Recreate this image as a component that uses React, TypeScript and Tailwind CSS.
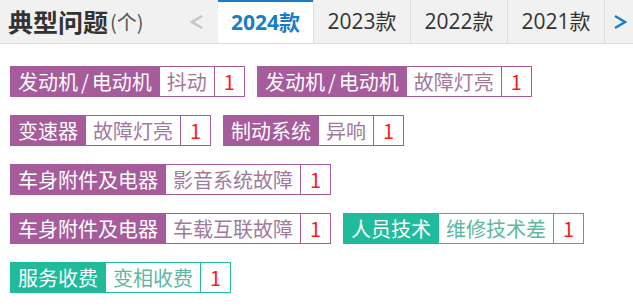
import React from "react";

type Tag = { cat: string; item: string; n: number; color: "purple" | "green" };

const tags: Tag[] = [
  { cat: "发动机/电动机", item: "抖动", n: 1, color: "purple" },
  { cat: "发动机/电动机", item: "故障灯亮", n: 1, color: "purple" },
  { cat: "变速器", item: "故障灯亮", n: 1, color: "purple" },
  { cat: "制动系统", item: "异响", n: 1, color: "purple" },
  { cat: "车身附件及电器", item: "影音系统故障", n: 1, color: "purple" },
  { cat: "车身附件及电器", item: "车载互联故障", n: 1, color: "purple" },
  { cat: "人员技术", item: "维修技术差", n: 1, color: "green" },
  { cat: "服务收费", item: "变相收费", n: 1, color: "green" },
];

const breakAfter = new Set([1, 3, 4, 6]);

function Cat({ text }: { text: string }) {
  const parts = text.split("/");
  if (parts.length === 1) return <>{text}</>;
  return (
    <>
      {parts[0]}
      <span className="mx-[3px]">/</span>
      {parts[1]}
    </>
  );
}

function TagView({ t }: { t: Tag }) {
  const purple = t.color === "purple";
  return (
    <div className="flex h-[31px] items-stretch text-[20px] leading-[29px]">
      <span
        className={
          purple
            ? "bg-[#a65b9b] text-white px-[7px] border border-[#a65b9b]"
            : "bg-[#1fbb9b] text-white px-[7px] border border-[#1fbb9b]"
        }
      >
        <Cat text={t.cat} />
      </span>
      <span
        className={
          purple
            ? "bg-white text-[#a07a9c] px-[7px] border-y border-r border-[#a65b9b]"
            : "bg-white text-[#5cb8a3] px-[7px] border-y border-r border-[#1fbb9b]"
        }
      >
        {t.item}
      </span>
      <span
        className={
          purple
            ? "bg-white text-[#ff1a1a] px-[9px] border-y border-r border-[#a65b9b]"
            : "bg-white text-[#ff1a1a] px-[9px] border-y border-r border-[#1fbb9b]"
        }
      >
        {t.n}
      </span>
    </div>
  );
}

export default function App() {
  const rows: Tag[][] = [];
  let cur: Tag[] = [];
  tags.forEach((t, i) => {
    cur.push(t);
    if (breakAfter.has(i) || i === tags.length - 1) {
      rows.push(cur);
      cur = [];
    }
  });
  return (
    <div
      className="w-[633px] h-[308px] bg-white overflow-hidden"
      style={{ fontFamily: '"Noto Sans CJK SC", "Noto Sans", sans-serif' }}
    >
      <div className="flex h-[44px] items-stretch bg-[#f1f1f1] border-b border-[#dcdcdc]">
        <div className="flex items-center pl-[8px] w-[180px]">
          <span className="text-[25px] font-bold text-[#333]">典型问题</span>
          <span className="text-[20px] text-[#555] ml-[2px]">(个)</span>
        </div>
        <div className="flex items-center w-[38px] pl-[10px]">
          <svg width="14" height="16" viewBox="0 0 14 16">
            <polyline points="12,2 2,8 12,14" fill="none" stroke="#c4c4c4" strokeWidth="2.4" />
          </svg>
        </div>
        <div
          className="flex items-center justify-center w-[95px] bg-white border-t-[2px] border-[#1a7cc4] text-[21px] font-bold text-[#1a7cc4]"
          style={{ fontFamily: '"Open Sans", "Noto Sans CJK SC", sans-serif' }}
        >
          2024款
        </div>
        {["2023款", "2022款", "2021款"].map((y) => (
          <div
            key={y}
            className="flex items-center justify-center w-[97px] border-l border-[#dcdcdc] text-[21px] text-[#333]"
            style={{ fontFamily: '"Open Sans", "Noto Sans CJK SC", sans-serif' }}
          >
            {y}
          </div>
        ))}
        <div className="flex items-center border-l border-[#dcdcdc] pl-[8px] flex-1">
          <svg width="14" height="16" viewBox="0 0 14 16">
            <polyline points="2,2 12,8 2,14" fill="none" stroke="#1a7cc4" strokeWidth="2.4" />
          </svg>
        </div>
      </div>
      <div className="flex flex-col gap-[18px] pl-[10px] pt-[22px]">
        {rows.map((r, i) => (
          <div key={i} className="flex gap-[12px]">
            {r.map((t, j) => (
              <TagView key={j} t={t} />
            ))}
          </div>
        ))}
      </div>
    </div>
  );
}
